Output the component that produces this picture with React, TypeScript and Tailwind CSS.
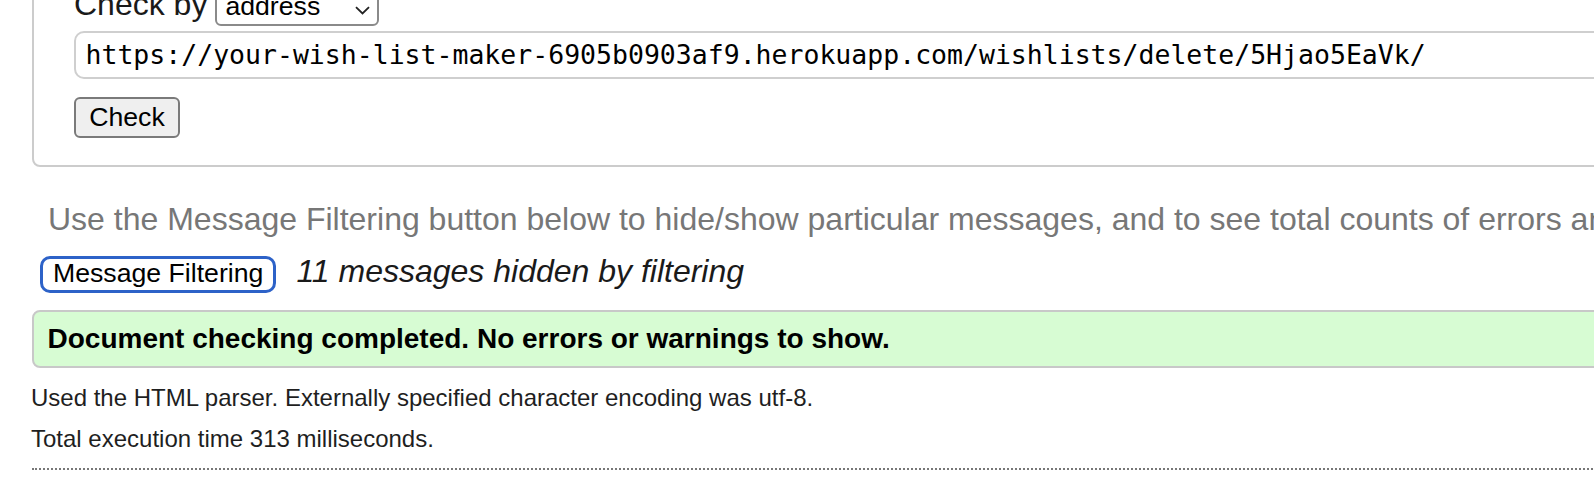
import React from "react";

export default function App() {
  return (
    <div className="w-[1594px] h-[502px] overflow-hidden bg-white font-['Liberation_Sans',Arial,sans-serif] text-[#222]">
      <div className="w-[1900px] -mt-[38px]">
        {/* Fieldset */}
        <div className="pl-[32px]">
          <div className="border-2 border-[#cccccc] rounded-[8px] pl-[40px] pt-[20px] pb-[27px]">
            <div className="flex items-baseline">
              <span className="text-[32px] leading-[40px] text-[#1a1a1a]">Check by</span>
              <div className="ml-[8px] w-[164px] h-[40px] border-2 border-[#8a8a8a] rounded-[6px] bg-white flex items-baseline pl-[8px] pr-[8px] relative">
                <span className="text-[26.67px] leading-[36px] text-black">address</span>
                <svg
                  className="absolute right-[7px] top-[18px]"
                  width="15"
                  height="9"
                  viewBox="0 0 15 9"
                  fill="none"
                >
                  <path d="M1 1.2 L7.5 7.5 L14 1.2" stroke="#222" strokeWidth="1.8" />
                </svg>
              </div>
            </div>
            <div className="mt-[5px] h-[48px] w-[1800px] border-2 border-[#cfcfcf] rounded-[10px] pl-[9.5px] flex items-center">
              <span className="font-['DejaVu_Sans_Mono','Liberation_Mono',monospace] text-[26.5px] leading-[44px] text-black whitespace-nowrap">
                https://your-wish-list-maker-6905b0903af9.herokuapp.com/wishlists/delete/5Hjao5EaVk/
              </span>
            </div>
            <div className="mt-[18px]">
              <button className="h-[41px] w-[106px] border-2 border-[#7a7a7a] rounded-[6px] bg-[#efefef] text-[26.67px] leading-[37px] text-black">
                Check
              </button>
            </div>
          </div>
        </div>

        {/* Filter info paragraph */}
        <p className="mt-[32px] pl-[48px] text-[32px] leading-[40px] text-[#777777] whitespace-nowrap">
          Use the Message Filtering button below to hide/show particular messages, and to see total counts of errors and warnings.
        </p>

        <div className="mt-[12px] pl-[40px] flex items-baseline">
          <button className="h-[37px] border-[3px] border-[#2d62c8] rounded-[10px] bg-white px-[10px] pb-[2px] text-[26.67px] leading-[29px] text-black whitespace-nowrap">
            Message Filtering
          </button>
          <span className="ml-[20px] text-[32px] leading-[40px] italic text-[#1a1a1a] whitespace-nowrap">
            11 messages hidden by filtering
          </span>
        </div>

        {/* Success box */}
        <div className="mt-[17px] ml-[32px] h-[58px] border-2 border-[#c8c8c8] rounded-[8px] bg-[#d7fcd3] px-[13.5px]">
          <p className="text-[28px] leading-[54px] font-bold text-black whitespace-nowrap">
            Document checking completed. No errors or warnings to show.
          </p>
        </div>

        <div className="pl-[31px] mt-[9px] text-[24px] leading-[41px] text-[#1f1f1f] whitespace-nowrap">
          <p>Used the HTML parser. Externally specified character encoding was utf-8.</p>
          <p>Total execution time 313 milliseconds.</p>
        </div>

        <div className="ml-[32px] mt-[9px] border-t-2 border-dotted border-[#777777]"></div>
      </div>
    </div>
  );
}
